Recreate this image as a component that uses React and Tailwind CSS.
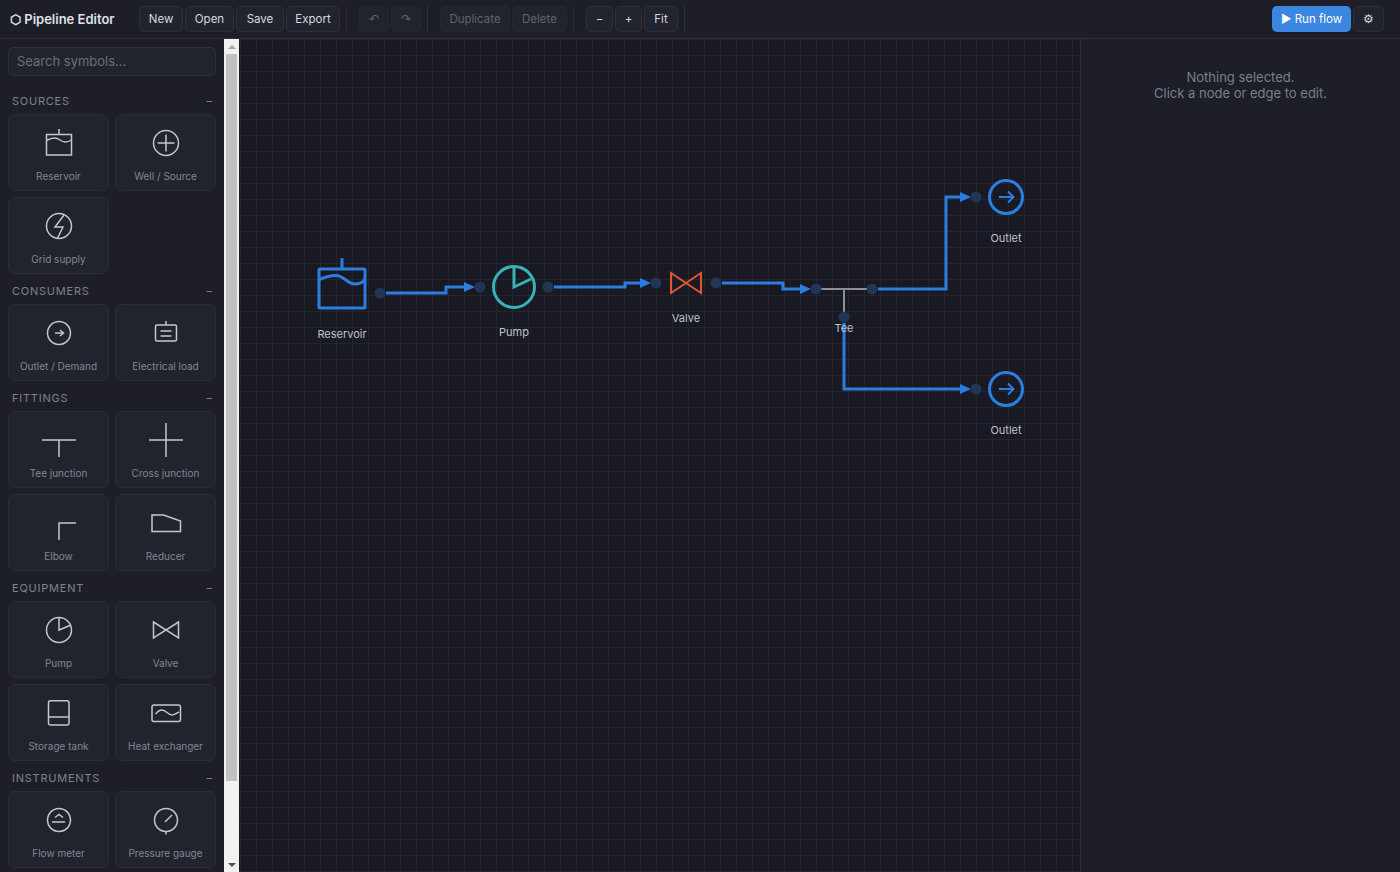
import React from 'react';

const btn = 'h-[26px] px-[9px] pt-px rounded-[5px] border border-[#2d2f39] bg-[#22242d] text-[11.5px] text-[#d5d8de] flex items-center justify-center';
const btnOff = 'h-[26px] px-[9px] pt-px rounded-[5px] border border-[#262831] bg-[#22242d] text-[11.5px] text-[#5f636d] flex items-center justify-center';

const Divider = () => <div className="w-px h-[26px] bg-[#2d2f39]" />;

const Icon = ({ children }) => (
    <svg width="32" height="32" viewBox="0 0 32 32" fill="none" stroke="#c2c6cd" strokeWidth="1.5" className="overflow-visible">
        {children}
    </svg>
);

const icons = {
    reservoir: <><rect x="3.5" y="7.5" width="25" height="20.5" /><path d="M16 2V7.5M3.5 13.5C6 12 9 11 12 11C16 11 18 15 22 15C25 15 27 14 28.5 13" /></>,
    well: <><circle cx="16" cy="16" r="12.5" /><path d="M7.5 16H24.5M16 7.5V24.5" /></>,
    grid: <><circle cx="16" cy="16" r="12.5" /><path d="M21 5L12 17H20L14.5 28" /></>,
    outlet: <><circle cx="16" cy="16" r="11.5" /><path d="M12 16H20M17 13L20.5 16L17 19" /></>,
    load: <><rect x="5.5" y="8" width="21" height="16" rx="1.5" /><path d="M16 4V8M10.5 14H21.5M10.5 19H21.5" /></>,
    tee: <path d="M-1 16H33M16 16V33" />,
    cross: <path d="M-1 16H33M16 -1V33" />,
    elbow: <path d="M33 16H16V33" />,
    reducer: <path d="M2 8H13.5L30.5 14V24.5H2Z" />,
    pump: <><circle cx="16" cy="16" r="12.5" /><path d="M16 3.5V16L28 11" /></>,
    valve: <path d="M3.5 8L16 16L3.5 24ZM28.5 8L16 16L28.5 24Z" />,
    tank: <><rect x="5.5" y="3.7" width="20.5" height="24.3" rx="2" /><path d="M5.5 20H26" /></>,
    exchanger: <><rect x="2" y="8" width="28.5" height="16.5" rx="2" /><path d="M5.5 17C8 14 10 13 12 13C16 13 18 18 22 18C25 18 27 16 29 15" /></>,
    flow: <><circle cx="16" cy="16" r="11.5" /><path d="M12 13.5L16 10.5L20 13.5M9 18H22" /></>,
    gauge: <><circle cx="16" cy="16" r="11.5" /><path d="M15 18L22 11M16 27.5V30.5" /></>,
};

const sections = [
    { name: 'Sources', items: [['Reservoir', 'reservoir'], ['Well / Source', 'well'], ['Grid supply', 'grid']] },
    { name: 'Consumers', items: [['Outlet / Demand', 'outlet'], ['Electrical load', 'load']] },
    { name: 'Fittings', items: [['Tee junction', 'tee'], ['Cross junction', 'cross'], ['Elbow', 'elbow'], ['Reducer', 'reducer']] },
    { name: 'Equipment', items: [['Pump', 'pump'], ['Valve', 'valve'], ['Storage tank', 'tank'], ['Heat exchanger', 'exchanger']] },
    { name: 'Instruments', items: [['Flow meter', 'flow'], ['Pressure gauge', 'gauge']] },
];

const labels = [
    ['Reservoir', 342, 334],
    ['Pump', 514, 332],
    ['Valve', 686, 318],
    ['Tee', 844, 328],
    ['Outlet', 1006, 238],
    ['Outlet', 1006, 430],
];

const ports = [[380, 293], [480, 287], [548, 287], [656, 283], [716, 283], [816, 289], [872, 289], [844, 317], [976, 197], [976, 389]];

const edges = [
    ['M386 293H446V287H466', '464,282 475,287 464,292'],
    ['M554 287H625V283H642', '640,278 651,283 640,288'],
    ['M722 283H783V289H802', '800,284 811,289 800,294'],
    ['M878 289H946V197H962', '960,192 971,197 960,202'],
    ['M844 323V389H962', '960,384 971,389 960,394'],
];

const Outlet = ({ y }) => (
    <g stroke="#2b7de0" fill="none">
        <circle cx="1006" cy={y} r="16.5" strokeWidth="3" />
        <path d={`M999 ${y}H1013M1008 ${y - 5.5}L1013.5 ${y}L1008 ${y + 5.5}`} strokeWidth="2" />
    </g>
);

const App = () => {
    return (
        <div className="h-screen w-full flex flex-col overflow-hidden bg-[#1d1e27] font-['Inter',sans-serif]">
            <header className="h-[39px] shrink-0 flex items-center pl-[10px] pr-4 border-b border-[#2d2f39]">
                <div className="w-[129px] pt-px text-[13px] font-semibold text-[#dfe2e7] whitespace-nowrap">⬡ Pipeline Editor</div>
                <div className="flex items-center gap-[2px]">
                    <button className={`${btn} w-[44px]`}>New</button>
                    <button className={`${btn} w-[49px]`}>Open</button>
                    <button className={`${btn} w-[48px]`}>Save</button>
                    <button className={`${btn} w-[54px]`}>Export</button>
                </div>
                <div className="mx-[6px]"><Divider /></div>
                <div className="flex items-center gap-[2px] ml-[6px]">
                    <button className={`${btnOff} w-[30px]`}>↶</button>
                    <button className={`${btnOff} w-[30px]`}>↷</button>
                </div>
                <div className="mx-[6px]"><Divider /></div>
                <div className="flex items-center gap-[2px] ml-[6px]">
                    <button className={`${btnOff} w-[70px]`}>Duplicate</button>
                    <button className={`${btnOff} w-[55px]`}>Delete</button>
                </div>
                <div className="mx-[6px]"><Divider /></div>
                <div className="flex items-center gap-[2px] ml-[6px]">
                    <button className={`${btn} w-[27px]`}>−</button>
                    <button className={`${btn} w-[27px]`}>+</button>
                    <button className={`${btn} w-[34px]`}>Fit</button>
                </div>
                <div className="ml-[6px]"><Divider /></div>
                <div className="ml-auto flex items-center gap-[2px]">
                    <button className="h-[26px] w-[79px] pt-px rounded-[5px] bg-[#3b86e0] text-[11.5px] text-white flex items-center justify-center">▶ Run flow</button>
                    <button className={`${btn} w-[31px]`}>⚙</button>
                </div>
            </header>

            <div className="flex-1 flex min-h-0">
                <aside className="w-[224px] shrink-0 overflow-hidden">
                    <div className="px-2 pt-2 pb-2">
                        <input
                            placeholder="Search symbols…"
                            className="w-full h-[29px] px-2 pb-0.5 rounded-[5px] border border-[#2d2f39] bg-[#22242d] text-[13px] placeholder:text-[#6b6f78] outline-none"
                        />
                    </div>
                    {sections.map(section => (
                        <div key={section.name} className="px-2 mt-[10px]">
                            <div className="h-[14px] mb-[6px] px-1 flex items-center justify-between text-[11px] tracking-[0.07em] uppercase text-[#7d828c]">
                                <span>{section.name}</span>
                                <span className="tracking-normal">–</span>
                            </div>
                            <div className="grid grid-cols-2 gap-[6px]">
                                {section.items.map(([label, icon]) => (
                                    <div key={label} className="h-[77px] rounded-[7px] border border-[#2a2c36] bg-[#22242d] flex flex-col items-center pt-3">
                                        <Icon>{icons[icon]}</Icon>
                                        <div className="mt-[10px] text-[10px] leading-[14px] text-[#7f8794] whitespace-nowrap">{label}</div>
                                    </div>
                                ))}
                            </div>
                        </div>
                    ))}
                </aside>

                {/* scrollbar as the browser draws it in the reference */}
                <div className="w-[15px] shrink-0 bg-[#f1f1f1] flex flex-col items-center">
                    <div className="h-[15px] flex items-center justify-center">
                        <div className="w-0 h-0 border-x-[4px] border-x-transparent border-b-[4px] border-b-[#a3a3a3]" />
                    </div>
                    <div className="w-[11px] h-[727px] bg-[#c1c1c1]" />
                    <div className="flex-1" />
                    <div className="h-[15px] flex items-center justify-center">
                        <div className="w-0 h-0 border-x-[4px] border-x-transparent border-t-[4px] border-t-[#505050]" />
                    </div>
                </div>

                <main className="flex-1 relative overflow-hidden bg-[#181922] bg-[linear-gradient(#23242d_1px,transparent_1px),linear-gradient(90deg,#23242d_1px,transparent_1px)] bg-[size:16px_16px] bg-[position:1px_0]">
                    <svg width="841" height="833" viewBox="239 39 841 833" className="absolute left-0 top-0">
                        <g fill="none" stroke="#2b7de0" strokeWidth="3">
                            <rect x="319" y="269" width="46" height="39" rx="1" />
                            <path d="M342 258V269M319 279.5C325 277 331 275.5 336 275.5C344 275.5 347 284 355 284C360 284 363 282 365 279.5" />
                        </g>
                        <g fill="none" stroke="#38b2b8" strokeWidth="3">
                            <circle cx="514" cy="287" r="20.5" />
                            <path d="M514 266V287L531 279" />
                        </g>
                        <path d="M671 273L686 283L671 293ZM701 273L686 283L701 293Z" fill="none" stroke="#e0562f" strokeWidth="2" />
                        <path d="M816 289H872M844 289V317" fill="none" stroke="#8b8f98" strokeWidth="2" />
                        <Outlet y={197} />
                        <Outlet y={389} />
                        {edges.map(([line, head]) => (
                            <g key={line}>
                                <path d={line} fill="none" stroke="#2b7de0" strokeWidth="3" />
                                <polygon points={head} fill="#2b7de0" />
                            </g>
                        ))}
                        {ports.map(([cx, cy]) => (
                            <circle key={`${cx}-${cy}`} cx={cx} cy={cy} r="5.5" fill="#1f3656" />
                        ))}
                    </svg>
                    {labels.map(([text, x, y]) => (
                        <div
                            key={`${text}-${y}`}
                            className="absolute -translate-x-1/2 -translate-y-1/2 text-[11px] leading-[14px] text-[#bfc3ca]"
                            style={{ left: x - 239, top: y - 39 }}
                        >
                            {text}
                        </div>
                    ))}
                </main>

                <aside className="w-[320px] shrink-0 border-l border-[#2d2f39] pt-[30px] text-center text-[13px] leading-4 text-[#7a7f89]">
                    <div>Nothing selected.</div>
                    <div>Click a node or edge to edit.</div>
                </aside>
            </div>
        </div>
    );
};

export default App;
